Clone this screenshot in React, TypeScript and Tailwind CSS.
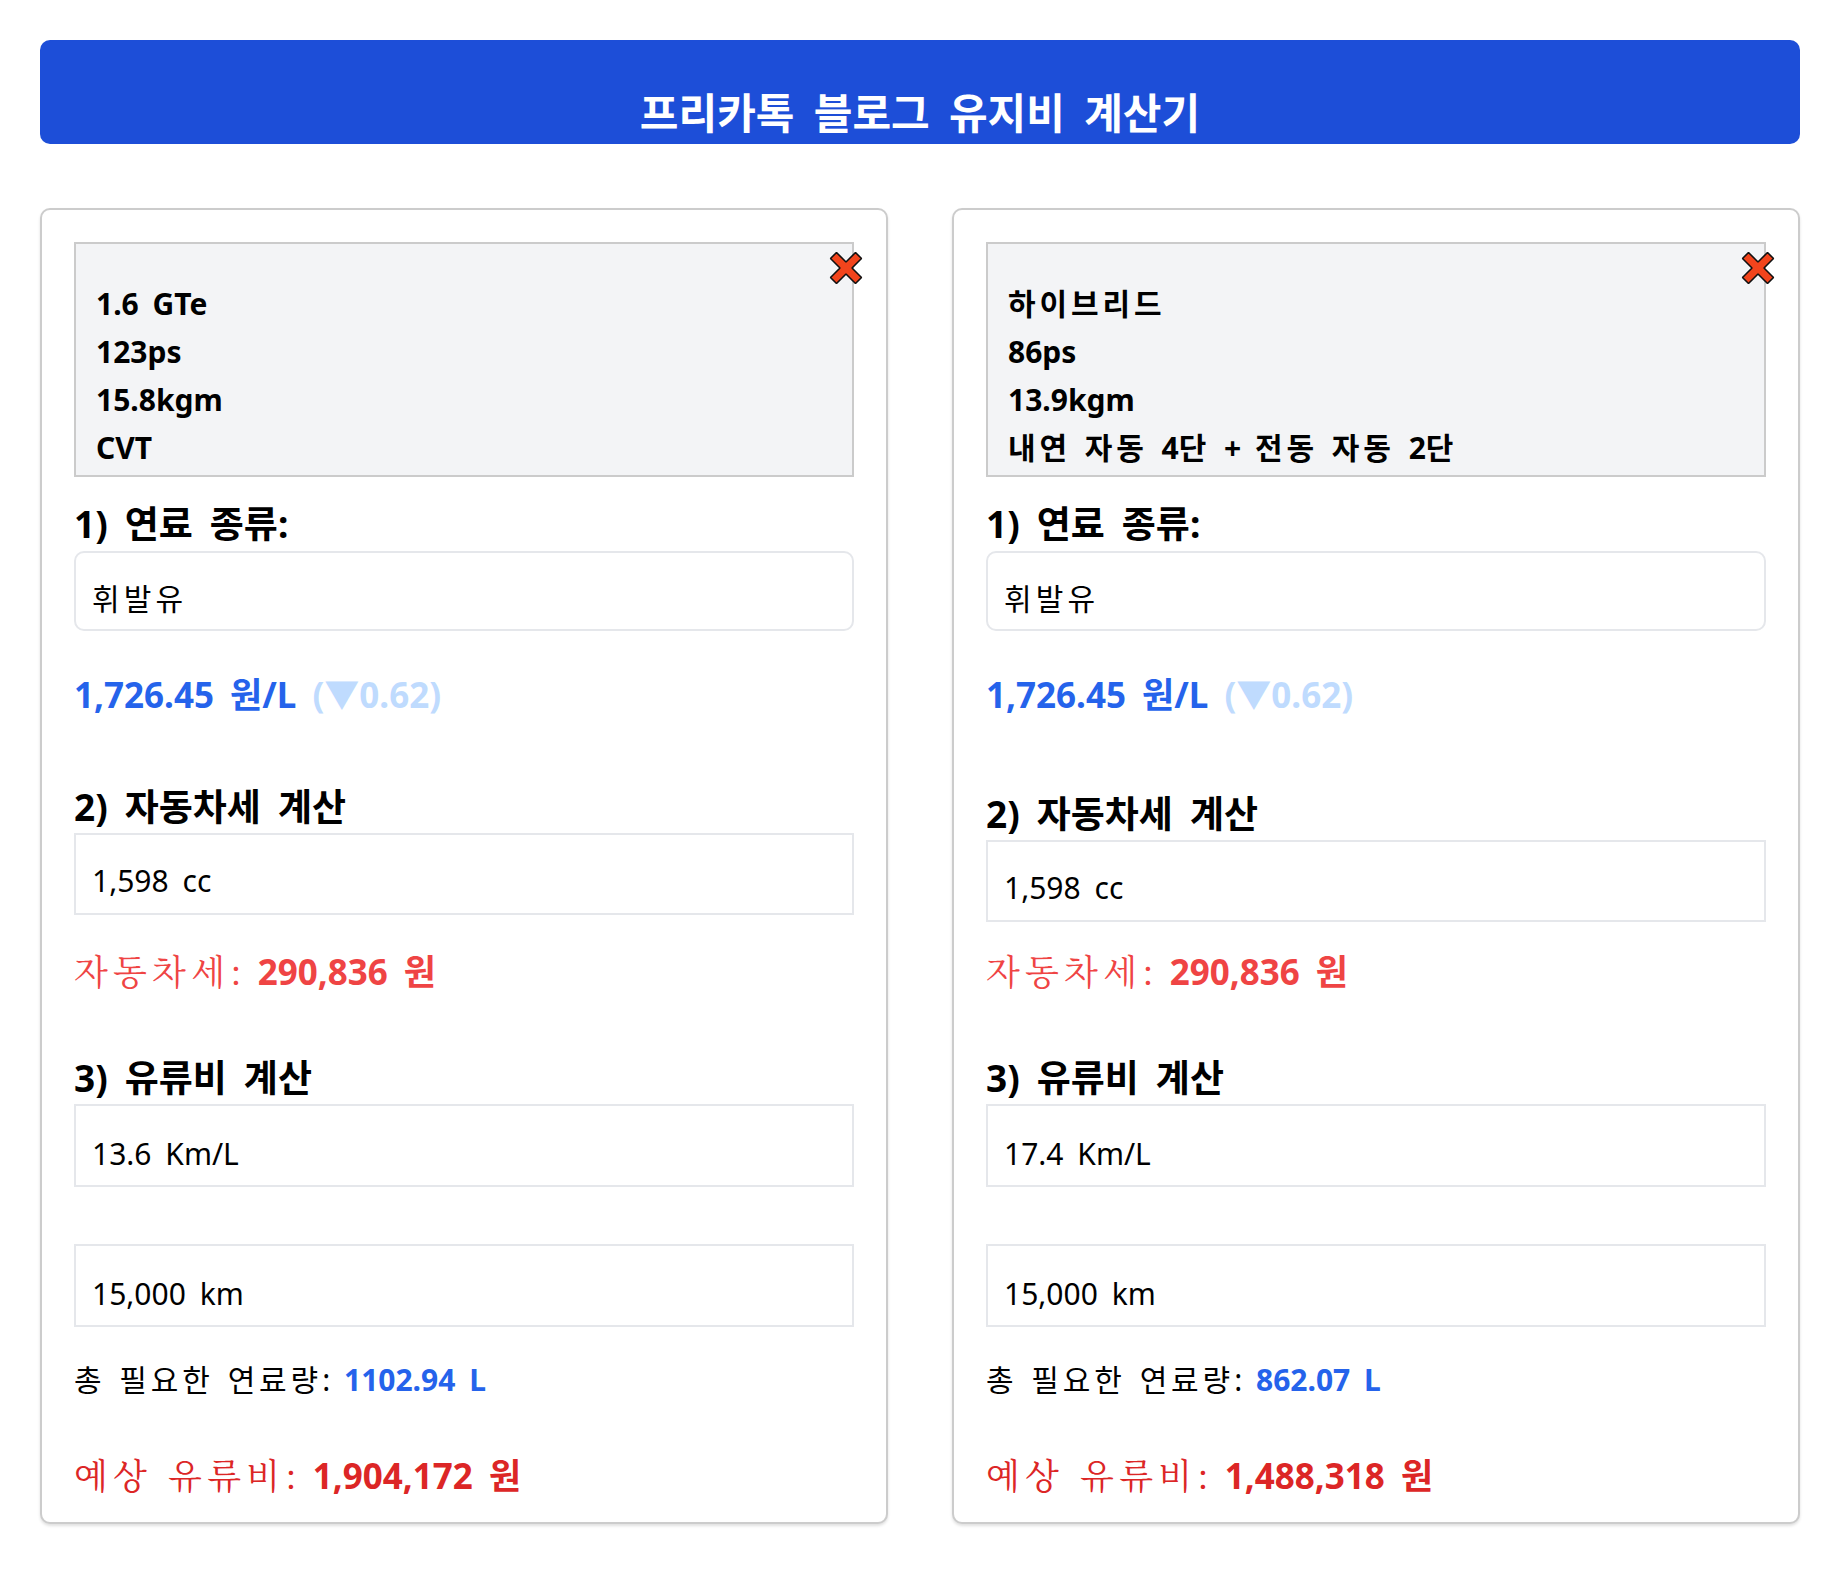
import React from "react";

const kr = (s: string, cls: string) =>
  s.split(/([가-힣]+)/).map((p, i) =>
    /[가-힣]/.test(p) ? (
      <span key={i} className={cls}>
        {p}
      </span>
    ) : (
      <React.Fragment key={i}>{p}</React.Fragment>
    )
  );

const CloseX = () => (
  <svg viewBox="0 0 34 34" className="absolute top-[7px] right-[-11px] w-[34px] h-[34px]">
    <polygon
      points="1.5,7.5 7.5,1.5 17,11 26.5,1.5 32.5,7.5 23,17 32.5,26.5 26.5,32.5 17,23 7.5,32.5 1.5,26.5 11,17"
      fill="#f2441c"
      stroke="#111"
      strokeWidth="1.6"
      strokeLinejoin="bevel"
    />
  </svg>
);

type CardProps = {
  lines: string[];
  eff: string;
  fuel: string;
  cost: string;
  h2mt: string;
  taxmt: string;
};

const Card = ({ lines, eff, fuel, cost, h2mt, taxmt }: CardProps) => (
  <div className="flex flex-col border-2 border-[#cccccc] rounded-[10px] px-8 pt-8 pb-[19px] shadow-[0_2px_3px_rgba(0,0,0,0.12)] bg-white">
    <div className="relative h-[235px] border-2 border-[#cbcbcb] bg-[#f3f4f6] pt-[36px] pl-5">
      <CloseX />
      {lines.map((l) => (
        <div key={l} className="text-[30px] leading-[48px] font-bold text-black [word-spacing:0.2em]">
          {kr(l, "tracking-[0.13em]")}
        </div>
      ))}
    </div>
    <div className="mt-[25px] text-[37px] leading-[43px] font-bold text-black [word-spacing:0.2em]">
      1) 연료 종류:
    </div>
    <div className="mt-[6px] h-[80px] rounded-[10px] border-2 border-[#e5e7eb] pl-4 pt-[22px] text-[30px] leading-[48px] text-black tracking-[0.14em]">
      휘발유
    </div>
    <div className="mt-[37px] text-[35px] leading-[54px] font-bold text-[#2563eb] [word-spacing:0.2em]">
      1,726.45 원/L <span className="text-[#bfdbfe]">(▼0.62)</span>
    </div>
    <div className={`${h2mt} text-[37px] leading-[43px] font-bold text-black [word-spacing:0.2em]`}>
      2) 자동차세 계산
    </div>
    <div className="mt-[5px] h-[82px] border-2 border-[#e5e7eb] pl-4 pt-[22px] text-[30px] leading-[48px] text-black [word-spacing:0.2em]">
      1,598 cc
    </div>
    <div className={`${taxmt} text-[35px] leading-[54px] text-[#ef4444] [word-spacing:0.2em]`}>
      <span className="font-['Noto_Serif_CJK_KR','Liberation_Serif',serif] font-normal">
        {kr("자동차세", "tracking-[0.15em]")}:{" "}
      </span>
      <span className="font-bold">290,836 원</span>
    </div>
    <div className="mt-[57px] text-[37px] leading-[43px] font-bold text-black [word-spacing:0.2em]">
      3) 유류비 계산
    </div>
    <div className="mt-[5px] h-[83px] border-2 border-[#e5e7eb] pl-4 pt-[24px] text-[30px] leading-[48px] text-black [word-spacing:0.2em]">
      {eff}
    </div>
    <div className="mt-[57px] h-[83px] border-2 border-[#e5e7eb] pl-4 pt-[24px] text-[30px] leading-[48px] text-black [word-spacing:0.2em]">
      15,000 km
    </div>
    <div className="mt-[29px] text-[30px] leading-[48px] text-black [word-spacing:0.2em]">
      {kr("총 필요한 연료량", "tracking-[0.13em]")}: <span className="font-bold text-[#2563eb]">{fuel}</span>
    </div>
    <div className="mt-[43px] text-[35px] leading-[54px] text-[#dc2626] [word-spacing:0.2em]">
      <span className="font-['Noto_Serif_CJK_KR','Liberation_Serif',serif] font-normal">
        {kr("예상 유류비", "tracking-[0.15em]")}:{" "}
      </span>
      <span className="font-bold">{cost}</span>
    </div>
  </div>
);

export default function App() {
  return (
    <div className="min-h-[1596px] bg-white px-10 pt-10 font-['Noto_Sans','Noto_Sans_CJK_KR',sans-serif]">
      <div className="h-[104px] rounded-[10px] bg-[#1d4ed8] pt-[48px] text-center text-[42px] leading-[50px] font-bold text-white [word-spacing:0.2em]">
        프리카톡 블로그 유지비 계산기
      </div>
      <div className="mt-16 grid grid-cols-2 gap-16">
        <Card
          lines={["1.6 GTe", "123ps", "15.8kgm", "CVT"]}
          eff="13.6 Km/L"
          fuel="1102.94 L"
          cost="1,904,172 원"
          h2mt="mt-[63px]"
          taxmt="mt-[28px]"
        />
        <Card
          lines={["하이브리드", "86ps", "13.9kgm", "내연 자동 4단 + 전동 자동 2단"]}
          eff="17.4 Km/L"
          fuel="862.07 L"
          cost="1,488,318 원"
          h2mt="mt-[70px]"
          taxmt="mt-[21px]"
        />
      </div>
    </div>
  );
}
